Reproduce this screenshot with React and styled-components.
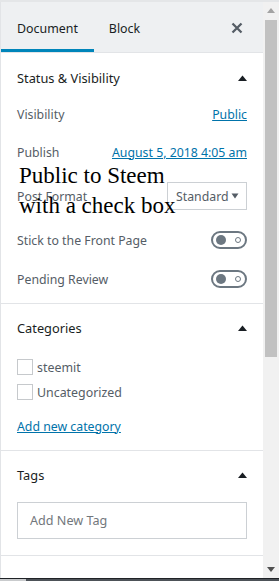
import React from "react";
import styled, { createGlobalStyle } from "styled-components";

const GlobalStyle = createGlobalStyle`
  html, body { margin: 0; padding: 0; background: #fff; }
  body { font-family: "Noto Sans", "Open Sans", sans-serif; font-size: 12.3px; color: #555d66; }
  * { box-sizing: border-box; }
`;

const Frame = styled.div`
  width: 279px;
  height: 581px;
  display: flex;
  flex-direction: column;
  overflow: hidden;
`;

const TopStrip = styled.div`
  height: 2px;
  background: #e4e6e8;
  flex: none;
`;

const Body = styled.div`
  flex: 1;
  display: flex;
  min-height: 0;
`;

const Panel = styled.div`
  flex: 1;
  border-left: 1px solid #e2e4e7;
  background: #fff;
  overflow: hidden;
`;

const Header = styled.div`
  display: flex;
  align-items: stretch;
  height: 51px;
  background: #eef0f2;
  border-bottom: 1px solid #e2e4e7;
`;

const Tab = styled.div`
  display: flex;
  align-items: center;
  padding: 0 ${(p) => (p.$active ? "16px" : "15px")};
  padding-top: 2px;
  color: #191e23;
  font-size: 12.4px;
  box-shadow: ${(p) => (p.$active ? "inset 0 -3px 0 #0085ba" : "none")};
`;

const CloseButton = styled.div`
  margin-left: auto;
  margin-right: 8px;
  width: 36px;
  display: flex;
  align-items: center;
  justify-content: center;
  padding-top: 1px;
`;

const Section = styled.div`
  position: relative;
  padding: 0 16px ${(p) => p.$pb || 0}px;
  border-bottom: 1px solid #e2e4e7;
`;

const SectionHead = styled.div`
  height: ${(p) => p.$h || 48}px;
  display: flex;
  align-items: center;
  justify-content: space-between;
  color: #191e23;
  font-size: 12.8px;
`;

const Row = styled.div`
  display: flex;
  align-items: center;
  justify-content: space-between;
  height: ${(p) => p.$h || 22}px;
  margin-top: ${(p) => p.$mt || 0}px;
`;

const Label = styled.span`
  color: #555d66;
`;

const Link = styled.a`
  color: #0073aa;
  text-decoration: underline;
  cursor: pointer;
`;

const Select = styled.div`
  width: 80px;
  height: 28px;
  border: 1px solid #ccd0d4;
  display: flex;
  align-items: center;
  justify-content: space-between;
  padding: 0 7px 0 8px;
  color: #555d66;
  background: #fff;
`;

const Toggle = styled.div`
  width: 36px;
  height: 18px;
  border: 2px solid #6c7781;
  border-radius: 9px;
  display: flex;
  align-items: center;
  justify-content: space-between;
  padding: 0 4px 0 3px;
`;

const Knob = styled.div`
  width: 10px;
  height: 10px;
  border-radius: 50%;
  background: #6c7781;
`;

const Ring = styled.div`
  width: 6px;
  height: 6px;
  border-radius: 50%;
  border: 1.5px solid #6c7781;
`;

const Overlay = styled.div`
  position: absolute;
  left: 18px;
  top: 108px;
  font-family: "Liberation Serif", "Times New Roman", serif;
  font-size: 23px;
  line-height: 30px;
  color: #000;
  pointer-events: none;
`;

const CheckRow = styled.label`
  display: flex;
  align-items: center;
  gap: 4px;
  height: 16px;
  margin-top: ${(p) => p.$mt || 0}px;
  color: #555d66;
  font-size: 12.4px;
`;

const Box = styled.span`
  width: 16px;
  height: 16px;
  border: 1px solid #c6c9cc;
  background: #fff;
  flex: none;
`;

const TagInput = styled.div`
  margin-top: 3px;
  height: 37px;
  border: 1px solid #ccd0d4;
  display: flex;
  align-items: center;
  padding: 0 12px;
  color: #72777c;
  font-size: 12.6px;
`;

const Scrollbar = styled.div`
  width: 16px;
  flex: none;
  background: #f1f1f1;
  display: flex;
  flex-direction: column;
  align-items: center;
`;

const Arrow = styled.div`
  height: 17px;
  display: flex;
  align-items: center;
  justify-content: center;
  flex: none;
`;

const Thumb = styled.div`
  width: 12px;
  height: 337px;
  background: #c1c1c1;
  margin-top: 1px;
`;

const Spacer = styled.div`
  flex: 1;
`;

const BottomBar = styled.div`
  height: 3px;
  flex: none;
  border-top: 1px solid #1f2226;
  background: linear-gradient(to right, #c9cbcd 0 26px, #4d5258 26px);
`;

const UpTriangle = () => (
  <svg width="9" height="6" viewBox="0 0 9 6">
    <path d="M0 6 L4.5 0.5 L9 6 Z" fill="#191e23" />
  </svg>
);

const CloseIcon = () => (
  <svg width="12" height="12" viewBox="0 0 12 12">
    <path d="M1.5 1.5 L10.5 10.5 M10.5 1.5 L1.5 10.5" stroke="#555d66" strokeWidth="2.3" />
  </svg>
);

const SmallDown = () => (
  <svg width="8" height="6" viewBox="0 0 8 6">
    <path d="M0.5 0.5 L7.5 0.5 L4 5.5 Z" fill="#555d66" />
  </svg>
);

export default function App() {
  return (
    <>
      <GlobalStyle />
      <Frame>
        <TopStrip />
        <Body>
          <Panel>
            <Header>
              <Tab $active>Document</Tab>
              <Tab>Block</Tab>
              <CloseButton>
                <CloseIcon />
              </CloseButton>
            </Header>

            <Section $pb={14}>
              <SectionHead $h={50}>
                Status &amp; Visibility
                <UpTriangle />
              </SectionHead>
              <Row>
                <Label>Visibility</Label>
                <Link>Public</Link>
              </Row>
              <Row $mt={16}>
                <Label>Publish</Label>
                <Link>August 5, 2018 4:05 am</Link>
              </Row>
              <Row $h={28} $mt={19}>
                <Label>Post Format</Label>
                <Select>
                  <span>Standard</span>
                  <SmallDown />
                </Select>
              </Row>
              <Row $h={20} $mt={20}>
                <Label>Stick to the Front Page</Label>
                <Toggle>
                  <Knob />
                  <Ring />
                </Toggle>
              </Row>
              <Row $h={20} $mt={19}>
                <Label>Pending Review</Label>
                <Toggle>
                  <Knob />
                  <Ring />
                </Toggle>
              </Row>
              <Overlay>
                Public to Steem
                <br />
                with a check box
              </Overlay>
            </Section>

            <Section $pb={15}>
              <SectionHead>
                Categories
                <UpTriangle />
              </SectionHead>
              <CheckRow $mt={7}>
                <Box />
                steemit
              </CheckRow>
              <CheckRow $mt={9}>
                <Box />
                Uncategorized
              </CheckRow>
              <Row $h={18} $mt={17}>
                <Link>Add new category</Link>
              </Row>
            </Section>

            <Section $pb={16}>
              <SectionHead>
                Tags
                <UpTriangle />
              </SectionHead>
              <TagInput>Add New Tag</TagInput>
            </Section>
          </Panel>
          <Scrollbar>
            <Arrow>
              <svg width="8" height="5" viewBox="0 0 8 5">
                <path d="M0 5 L4 0 L8 5 Z" fill="#a3a3a3" />
              </svg>
            </Arrow>
            <Thumb />
            <Spacer />
            <Arrow>
              <svg width="8" height="5" viewBox="0 0 8 5">
                <path d="M0 0 L8 0 L4 5 Z" fill="#505050" />
              </svg>
            </Arrow>
          </Scrollbar>
        </Body>
        <BottomBar />
      </Frame>
    </>
  );
}
